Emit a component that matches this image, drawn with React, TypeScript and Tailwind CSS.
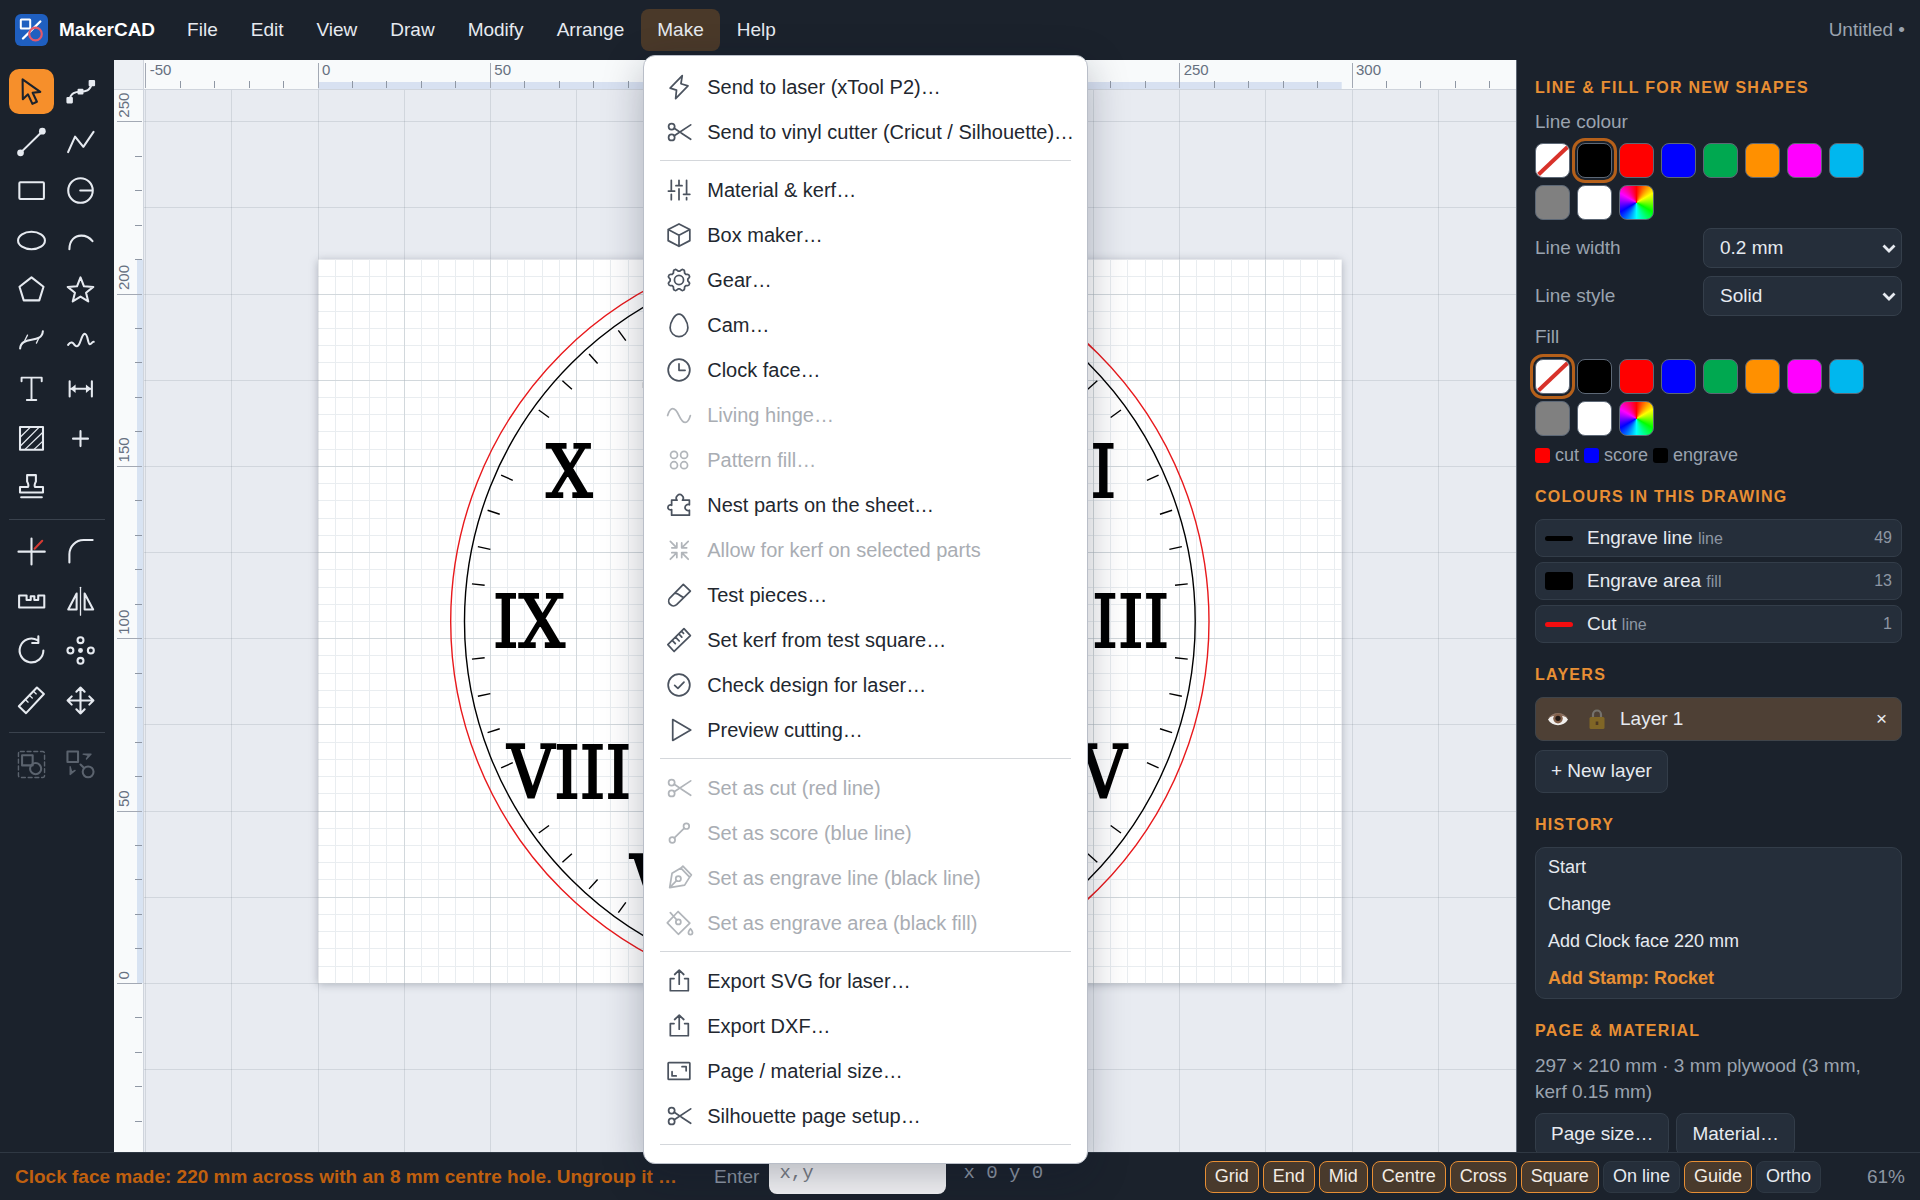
import React, { useState } from "react";

const SCALE = 3.4468; // px per mm at 61%
const ORIGIN_X = 174;
const ORIGIN_Y = 893.4;
const PAGE_W = 297;
const PAGE_H = 210;

const mmX = (mm: number) => ORIGIN_X + mm * SCALE;
const mmY = (mm: number) => ORIGIN_Y - mm * SCALE;
const snap = (v: number) => Math.round(v) + 0.5;

const range = (from: number, to: number, step: number) => {
  const out: number[] = [];
  for (let v = from; v <= to; v += step) out.push(v);
  return out;
};

/* ---------- icons ---------- */

const gearPath = () => {
  const pts: string[] = [];
  for (let i = 0; i < 64; i++) {
    const a = (i / 64) * Math.PI * 2;
    const wave = -Math.cos(a * 8);
    const r = 9.2 + 1.3 * Math.max(-0.8, Math.min(0.8, wave * 1.6));
    pts.push(
      `${(12 + r * Math.sin(a)).toFixed(2)} ${(12 - r * Math.cos(a)).toFixed(2)}`
    );
  }
  return `M${pts.join("L")}Z`;
};

const menuIcons: Record<string, React.ReactNode> = {
  bolt: <path d="M15 1.5 3.8 13l5.9 1.9-.8 7.8L20.3 11l-6.5-2z" />,
  scissors: (
    <>
      <circle cx="5.2" cy="7" r="2.8" />
      <circle cx="5.2" cy="17" r="2.8" />
      <path d="M7.6 8.6 12 11.5M14 12.9l8.8 5.8M7.6 15.4 22.8 5.4" />
    </>
  ),
  sliders: (
    <path d="M4.9 3v10M2.2 13H8M4.9 16v5M12 3v5M9.2 8h5.6M12 11v10M19 3v13M16.2 16H22M19 19v2" />
  ),
  box: (
    <path d="M12 1.8 22 7v10.2l-10 5.2-10-5.2V7zM2 7l10 5.2L22 7M12 12.2v10.2" />
  ),
  gear: (
    <>
      <path d={gearPath()} />
      <circle cx="12" cy="12" r="4.2" />
    </>
  ),
  cam: (
    <path d="M12 2C8 2 3.8 9.4 3.8 14.5a8.2 8.2 0 0 0 16.4 0C20.2 9.4 16 2 12 2z" />
  ),
  clock: (
    <>
      <circle cx="12" cy="12" r="10" />
      <path d="M12 6.4v5.9h5.6" />
    </>
  ),
  wave: <path d="M1.5 12.5c2.5-8.5 6.5-8.5 10.5 0s8 8.5 10.5 0" />,
  pattern: (
    <>
      <circle cx="7.4" cy="7.3" r="3.2" />
      <circle cx="16.7" cy="7.3" r="3.2" />
      <circle cx="7.4" cy="16.8" r="3.2" />
      <circle cx="16.7" cy="16.8" r="3.2" />
    </>
  ),
  puzzle: (
    <path d="M5.2 7.6h5a3.2 3.2 0 1 1 5 0h6.4v4.2a2.8 2.8 0 1 0 0 5v4.6H5.2v-5.2a2.3 2.3 0 1 1 0-4z" />
  ),
  shrink: (
    <path d="m4 4 6 6M10 5.5V10H5.4M20.5 4l-6 6M14.5 5.5V10h4.6M4 20.5l6-6M10 19v-4.5H5.4M20.5 20.5l-6-6M14.5 19v-4.5h4.6" />
  ),
  test: (
    <path d="m16 2.2 6.5 6.2-12.7 12.5a4.4 4.4 0 0 1-6.3-6.1zM8.8 10.6c2.6-.4 4.2 2.6 7.4 3.6" />
  ),
  ruler: (
    <path d="m16.6 1.5 5.9 6.4L7.5 22.6l-5.8-6.3zM5.8 12.4l2.8 3M8.8 9.3l3.4 3.6M11.8 6.3l2.8 3M14.4 3.9l1.8 1.9" />
  ),
  check: (
    <>
      <circle cx="12" cy="12" r="10" />
      <path d="m8 12.3 3 2.8 5.6-5.7" />
    </>
  ),
  play: <path d="M6.2 2.4 22.8 12 6.2 21.6z" />,
  score: (
    <>
      <circle cx="5.8" cy="18.5" r="2.6" />
      <circle cx="18.8" cy="5.7" r="2.6" />
      <path d="M7.7 16.6 16.9 7.6" />
    </>
  ),
  pen: (
    <>
      <path d="M3.4 20.8 5.6 7.6l8.2-4.8 8 8.4-4.6 7.4zM13.8 2.8 15.6 1l7.8 8.2-1.6 2M3.4 20.8l6.3-6.4" />
      <circle cx="11.4" cy="12.6" r="2.4" />
    </>
  ),
  bucket: (
    <>
      <path d="M11.2 1.4 22 12.2 11.4 22.4 1.2 11.8zM4 2.4l6 6.8" />
      <circle cx="11.4" cy="11" r="2.3" />
      <path d="M22.6 17.2c-1.2 1.8-1.9 2.6-1.9 3.6a1.9 1.9 0 0 0 3.8 0c0-1-.7-1.8-1.9-3.6z" />
    </>
  ),
  export: <path d="M7.4 9.8H4V21h16.6V9.8h-3.4M12.2 2v13M8 6l4.2-4 4.2 4" />,
  page: (
    <>
      <rect x="2" y="4.2" width="20" height="15.6" rx="0.6" />
      <path d="M5.6 12.6v4h3.8M14.8 8h3.8v3.8" />
    </>
  ),
};

const toolIcons: Record<string, React.ReactNode> = {
  select: (
    <path d="M5.1 2.6 5.3 18l4-3.8 3.4 7.4 3.5-1.7-3.3-6.9 5.9-.7z" />
  ),
  node: (
    <>
      <path d="M3.4 18.6C4.6 12.6 8 12.3 12 12.2s7.4-.5 8.8-6.6" />
      <g fill="currentColor" stroke="none">
        <rect x="1.1" y="16.2" width="5" height="5" rx="0.8" />
        <rect x="9.7" y="9.8" width="4.6" height="4.6" rx="0.8" />
        <rect x="18.3" y="3" width="5" height="5" rx="0.8" />
      </g>
    </>
  ),
  line: (
    <>
      <path d="M3.4 20.8 20.3 4.2" />
      <circle cx="3.5" cy="20.8" r="2.6" fill="currentColor" stroke="none" />
      <circle cx="20.4" cy="4" r="2.6" fill="currentColor" stroke="none" />
    </>
  ),
  polyline: <path d="M2.4 20.2 7.8 8.2l6.4 7.9L22.1 4.6" />,
  rect: <rect x="2.6" y="5.6" width="19" height="13" rx="0.8" />,
  circle: (
    <>
      <circle cx="12" cy="12" r="9.5" />
      <path d="M11.8 12h9.2" />
    </>
  ),
  ellipse: <ellipse cx="12" cy="12" rx="10.4" ry="6.8" />,
  arc: <path d="M3.4 18.8C3.4 12 7.5 8.2 12.6 8.2c3.6 0 6.5 1.5 8.7 4.3" />,
  pentagon: <path d="m12 2.6 9.3 7.3L18 20.4H6L2.7 9.9z" />,
  star: (
    <path d="m12 2.6 2.7 6.9 7.2.5-5.6 4.5 1.7 6.7-6-3.7-6 3.7 1.7-6.7L2.1 10l7.2-.5z" />
  ),
  spline: (
    <>
      <path d="M3.2 19C4 8.5 20 16 20.8 5.6" />
      <path strokeWidth="1" d="M6.8 12.8 8.9 8.6M15.8 14.8 17.6 11" />
    </>
  ),
  freehand: (
    <path d="M2.4 16.2c2.4-3.6 4-1.2 5.4.4 4 3.600 4.4-8.600 7.4-9 2.6 0 2.4 8 4 8 1.2.3 1.6-2 3-1.8" />
  ),
  text: (
    <path strokeWidth="1.5" d="M4.3 6.4V3.6h15.6v2.8M12 3.6v17.3M8.4 20.9h7.3" />
  ),
  dimension: (
    <>
      <path d="M3.6 6.4v11.7M20.8 6.4v11.7M5 12.2h14.5" />
      <path
        d="M8.2 8.9 4.2 12.2l4 3.3zM16.2 8.9l4 3.3-4 3.3z"
        fill="currentColor"
        stroke="none"
      />
    </>
  ),
  hatch: (
    <>
      <rect x="3.1" y="3.1" width="17.8" height="17.6" />
      <path
        strokeWidth="1"
        d="M3.6 10.6 10.8 3.6M3.6 17.6 17.6 3.6M7 20.4 20.4 7.6M14 20.4l6.4-6"
      />
    </>
  ),
  point: <path d="M12 6.3v11.6M6.2 12.1h11.6" />,
  stamp: (
    <path d="M3.1 11.6h6.1c1-1.2.3-2.6-.6-4.3V2.4h6.8v4.9c-.9 1.7-1.6 3.1-.6 4.3h6.1v4.2H3.1zM4 19.5h16" />
  ),
  trim: (
    <>
      <path d="M1.9 12.1h20.4M12 1.9v20.2" />
      <path d="m14.4 9.8 5.9-6.1" stroke="#d63a32" />
    </>
  ),
  fillet: <path d="M3.4 20.5v-6.4a11 11 0 0 1 11-11h7" />,
  joint: <path d="M2.4 7.4h5.8v3.4h3.2V8h2.8v2.8h3V7.4h4.7v9.3H2.4z" />,
  mirror: (
    <>
      <path d="M9 5.8v12.4H2.5zM15.2 5.8v12.4h6.6z" />
      <path strokeWidth="1" d="M12 1v21.6" />
    </>
  ),
  rotate: <path d="M21.2 12a9.2 9.2 0 1 1-4.6-8M17.3 1v5.2h-4.8" />,
  polar: (
    <>
      <circle cx="12" cy="4" r="2.3" />
      <circle cx="4.2" cy="12" r="2.3" />
      <circle cx="20" cy="12" r="2.3" />
      <circle cx="12" cy="20" r="2.3" />
      <circle cx="12" cy="12" r="1.9" fill="currentColor" stroke="none" />
    </>
  ),
  measure: (
    <>
      <path d="m16.2 2 5.4 5L7.8 21.8l-5.6-5.4z" />
      <path strokeWidth="1" d="m7.6 11.6 1.8 1.7M10.8 8.4l1.8 1.7M13.9 5.2l1.8 1.7" />
    </>
  ),
  move: (
    <path d="M12 2v20M2 12h20M8.800 5.200 12 2l3.200 3.200M8.800 18.800 12 22l3.200-3.200M5.200 8.800 2 12l3.200 3.200M18.800 8.800 22 12l-3.200 3.200" />
  ),
  group: (
    <>
      <rect
        x="1.9"
        y="1.9"
        width="20.2"
        height="20.2"
        rx="1.5"
        strokeWidth="1.1"
        strokeDasharray="3 2.2"
      />
      <rect x="4.7" y="4.9" width="8.2" height="7.8" />
      <circle cx="15.2" cy="15.2" r="4.3" />
    </>
  ),
  ungroup: (
    <>
      <rect x="1.9" y="1.9" width="8.2" height="8.2" />
      <circle cx="17.9" cy="17.7" r="4.2" />
      <path d="M12 12l2.4 2.4" />
      <path
        strokeWidth="1"
        fill="currentColor"
        d="M14 4h6.2l-3.600 3.700 1.600-2.700zM4 13.600v6.200l3.800-3.200-2.600 1.200z"
      />
    </>
  ),
};

const Icon = ({ children, className }: { children: React.ReactNode; className: string }) => (
  <svg
    viewBox="0 0 24 24"
    fill="none"
    stroke="currentColor"
    strokeWidth="1.6"
    strokeLinecap="round"
    strokeLinejoin="round"
    aria-hidden="true"
    className={`shrink-0 overflow-visible ${className}`}
  >
    {children}
  </svg>
);

/* ---------- top bar ---------- */

interface MenuEntry {
  icon: string;
  label: string;
  disabled?: boolean;
}

const makeMenu: MenuEntry[][] = [
  [
    { icon: "bolt", label: "Send to laser (xTool P2)…" },
    { icon: "scissors", label: "Send to vinyl cutter (Cricut / Silhouette)…" },
  ],
  [
    { icon: "sliders", label: "Material & kerf…" },
    { icon: "box", label: "Box maker…" },
    { icon: "gear", label: "Gear…" },
    { icon: "cam", label: "Cam…" },
    { icon: "clock", label: "Clock face…" },
    { icon: "wave", label: "Living hinge…", disabled: true },
    { icon: "pattern", label: "Pattern fill…", disabled: true },
    { icon: "puzzle", label: "Nest parts on the sheet…" },
    { icon: "shrink", label: "Allow for kerf on selected parts", disabled: true },
    { icon: "test", label: "Test pieces…" },
    { icon: "ruler", label: "Set kerf from test square…" },
    { icon: "check", label: "Check design for laser…" },
    { icon: "play", label: "Preview cutting…" },
  ],
  [
    { icon: "scissors", label: "Set as cut (red line)", disabled: true },
    { icon: "score", label: "Set as score (blue line)", disabled: true },
    { icon: "pen", label: "Set as engrave line (black line)", disabled: true },
    { icon: "bucket", label: "Set as engrave area (black fill)", disabled: true },
  ],
  [
    { icon: "export", label: "Export SVG for laser…" },
    { icon: "export", label: "Export DXF…" },
    { icon: "page", label: "Page / material size…" },
    { icon: "scissors", label: "Silhouette page setup…" },
  ],
];

const MakeMenu = () => (
  <div
    role="menu"
    className="absolute left-0 top-full z-20 ml-0.5 mt-1 w-[445px] rounded-xl border border-[#b9bec8] bg-white pb-3 pt-2 shadow-[0_12px_40px_rgba(15,23,42,0.28)]"
  >
    {makeMenu.map((group, i) => (
      <div key={i}>
        {group.map((item) => (
          <button
            key={item.label}
            role="menuitem"
            disabled={item.disabled}
            className="flex h-[45px] w-full items-center gap-[15px] whitespace-nowrap pl-[22px] text-left text-[20px] text-[#22272f] disabled:text-[#a9adb3]"
          >
            <Icon
              className={`h-[26px] w-[26px] ${
                item.disabled ? "text-[#b1b5ba]" : "text-[#4b535f]"
              }`}
            >
              {menuIcons[item.icon]}
            </Icon>
            {item.label}
          </button>
        ))}
        <hr className="mx-4 my-1.5 border-[#d4d7db]" />
      </div>
    ))}
  </div>
);

const Logo = () => (
  <svg viewBox="0 0 33 32" className="h-8 w-[33px]" fill="none" aria-hidden="true">
    <rect width="33" height="32" rx="6" fill="#1f5fc0" />
    <rect x="5.8" y="5.6" width="9.4" height="9" rx="0.5" stroke="#fff" strokeWidth="2" />
    <path d="M25.300 7.500 8 24.500" stroke="#fff" strokeWidth="2.4" strokeLinecap="round" />
    <circle cx="20.5" cy="20" r="6.3" stroke="#e2596b" strokeWidth="2.2" />
  </svg>
);

const menus = ["File", "Edit", "View", "Draw", "Modify", "Arrange", "Make", "Help"];

const TopBar = () => (
  <header className="flex h-[60px] shrink-0 items-center px-[15px]">
    <Logo />
    <span className="ml-[11px] mr-4 font-bold text-white">MakerCAD</span>
    <nav className="flex gap-px">
      {menus.map((name) => (
        <div key={name} className="relative">
          <button
            className={`h-[42px] rounded-lg px-4 ${name === "Make" ? "bg-[#4a3929]" : ""}`}
          >
            {name}
          </button>
          {name === "Make" && <MakeMenu />}
        </div>
      ))}
    </nav>
    <span className="ml-auto text-[#9aa3af]">Untitled •</span>
  </header>
);

/* ---------- tools ---------- */

const drawTools = [
  "select", "node", "line", "polyline", "rect", "circle", "ellipse", "arc",
  "pentagon", "star", "spline", "freehand", "text", "dimension", "hatch",
  "point", "stamp",
];
const editTools = ["trim", "fillet", "joint", "mirror", "rotate", "polar", "measure", "move"];
const groupTools = ["group", "ungroup"];

const ToolBar = () => {
  const [tool, setTool] = useState("select");

  const renderTool = (name: string, disabled = false) => (
    <button
      key={name}
      aria-label={name}
      disabled={disabled}
      onClick={() => setTool(name)}
      className={`flex h-[45px] w-[45px] items-center justify-center rounded-[10px] disabled:text-[#5b636e] ${
        tool === name ? "bg-[#f68f2b] text-[#1b222c]" : ""
      }`}
    >
      <Icon className="h-[31px] w-[31px]">{toolIcons[name]}</Icon>
    </button>
  );

  return (
    <div className="flex w-[114px] shrink-0 flex-col gap-[9px] px-[9px] pt-[9px]">
      <div className="grid h-[441px] grid-cols-[45px_45px] content-between gap-x-1">
        {drawTools.map((t) => renderTool(t))}
      </div>
      <hr className="border-[#3a424d]" />
      <div className="grid h-[194px] grid-cols-[45px_45px] content-between gap-x-1">
        {editTools.map((t) => renderTool(t))}
      </div>
      <hr className="border-[#3a424d]" />
      <div className="grid grid-cols-[45px_45px] gap-x-1">
        {groupTools.map((t) => renderTool(t, true))}
      </div>
    </div>
  );
};

/* ---------- canvas ---------- */

const HorizontalRuler = () => (
  <svg className="h-[29px] w-full" aria-hidden="true">
    <rect x={mmX(0)} y="22" width={PAGE_W * SCALE} height="7" fill="#d8e1f1" />
    {range(-50, 340, 10).map((mm) => {
      const major = mm % 50 === 0;
      return (
        <g key={mm}>
          <path
            d={`M${snap(mmX(mm) - 0.5)} ${major ? 3 : 21}V28`}
            stroke={major ? "#a3a9b4" : "#8f97a4"}
          />
          {major && (
            <text x={mmX(mm) + 4} y="15" fontSize="15" fill="#667080">
              {mm}
            </text>
          )}
        </g>
      );
    })}
  </svg>
);

const VerticalRuler = () => (
  <svg className="h-full w-[29px]" aria-hidden="true">
    <rect x="23" y={mmY(PAGE_H)} width="6" height={PAGE_H * SCALE} fill="#d8e3f2" />
    {range(-40, 250, 10).map((mm) => {
      const major = mm % 50 === 0;
      const y = mmY(mm);
      return (
        <g key={mm}>
          <path
            d={`M${major ? 3 : 21} ${snap(y - 0.5)}H28`}
            stroke={major ? "#a3a9b4" : "#8f97a4"}
          />
          {major && (
            <text
              transform={`translate(15 ${y - 4}) rotate(-90)`}
              fontSize="15"
              fill="#667080"
            >
              {mm}
            </text>
          )}
        </g>
      );
    })}
  </svg>
);

const numerals = ["XII", "I", "II", "III", "IV", "V", "VI", "VII", "VIII", "IX", "X", "XI"];

const ClockFace = () => {
  const cx = mmX(PAGE_W / 2);
  const cy = mmY(PAGE_H / 2);
  const at = (r: number, deg: number) => {
    const a = (deg * Math.PI) / 180;
    return [cx + r * SCALE * Math.sin(a), cy - r * SCALE * Math.cos(a)];
  };

  return (
    <g>
      <circle cx={cx} cy={cy} r={110 * SCALE} fill="none" stroke="#e8191c" strokeWidth="1.4" />
      <circle cx={cx} cy={cy} r={106 * SCALE} fill="none" stroke="#000" strokeWidth="1.4" />
      {range(0, 59, 1)
        .filter((m) => m % 5 !== 0)
        .map((m) => {
          const [x1, y1] = at(100.7, m * 6);
          const [x2, y2] = at(104.4, m * 6);
          return (
            <path key={m} d={`M${x1} ${y1}L${x2} ${y2}`} stroke="#000" strokeWidth="1.4" />
          );
        })}
      {numerals.map((n, i) => {
        const [x, y] = at(87.3, i * 30);
        return (
          <text
            key={n}
            x={x}
            y={y + 26}
            textAnchor="middle"
            fontSize="72"
            stroke="#000"
            strokeWidth="2"
            className="font-['DejaVu_Serif_Condensed','DejaVu_Serif',serif]"
          >
            {n}
          </text>
        );
      })}
    </g>
  );
};

const Canvas = () => (
  <main className="grid min-w-0 flex-1 grid-cols-[30px_minmax(0,1fr)] grid-rows-[30px_minmax(0,1fr)] overflow-hidden">
    <div className="border-b border-r border-[#cfd4dc] bg-[#edf0f4]" />
    <div className="border-b border-[#cfd4dc] bg-[#f8fafb]">
      <HorizontalRuler />
    </div>
    <div className="border-r border-[#cfd4dc] bg-[#f8fafb]">
      <VerticalRuler />
    </div>
    <svg className="h-full w-full bg-[#e8ebf1]" role="img" aria-label="Drawing">
      <rect
        x={mmX(0)}
        y={mmY(PAGE_H)}
        width={PAGE_W * SCALE}
        height={PAGE_H * SCALE}
        fill="#fff"
        className="drop-shadow-[0_1px_4px_rgba(30,41,59,0.3)]"
      />
      <g stroke="#e9edf0">
        {range(5, 295, 5).map((mm) => (
          <path key={mm} d={`M${snap(mmX(mm) - 0.5)} ${mmY(PAGE_H)}V${mmY(0)}`} />
        ))}
        {range(5, 205, 5).map((mm) => (
          <path key={mm} d={`M${mmX(0)} ${snap(mmY(mm) - 0.5)}H${mmX(PAGE_W)}`} />
        ))}
      </g>
      <g stroke="#5b6b78" strokeOpacity="0.16">
        {range(-50, 325, 25).map((mm) => (
          <path key={mm} d={`M${snap(mmX(mm) - 0.5)} 0V2000`} />
        ))}
        {range(-50, 250, 25).map((mm) => (
          <path key={mm} d={`M0 ${snap(mmY(mm) - 0.5)}H3000`} />
        ))}
      </g>
      <ClockFace />
    </svg>
  </main>
);

/* ---------- side panel ---------- */

const palette = [
  { name: "None", className: "bg-white" },
  { name: "Black", className: "bg-black" },
  { name: "Red", className: "bg-[#ff0000]" },
  { name: "Blue", className: "bg-[#0000ff]" },
  { name: "Green", className: "bg-[#00a850]" },
  { name: "Orange", className: "bg-[#ff9000]" },
  { name: "Magenta", className: "bg-[#ff00ff]" },
  { name: "Cyan", className: "bg-[#00b7ee]" },
  { name: "Grey", className: "bg-[#808080]" },
  { name: "White", className: "bg-white" },
  {
    name: "Custom",
    className: "bg-[conic-gradient(red,yellow,lime,cyan,blue,magenta,red)]",
  },
];

const Swatches = ({ initial, label }: { initial: string; label: string }) => {
  const [selected, setSelected] = useState(initial);
  return (
    <div role="group" aria-label={label} className="flex flex-wrap gap-[7px]">
      {palette.map(({ name, className }) => (
        <button
          key={name}
          aria-label={name}
          aria-pressed={selected === name}
          onClick={() => setSelected(name)}
          className={`h-[35px] w-[35px] overflow-hidden rounded-lg border border-[#5d6876] ${className} ${
            selected === name ? "outline-[3px] outline-offset-2 outline-[#b5601a]" : ""
          }`}
        >
          {name === "None" && (
            <svg viewBox="0 0 33 33" className="h-full w-full" aria-hidden="true">
              <path d="M2.5 30.5 31.5 3" stroke="#d8322a" strokeWidth="4" />
            </svg>
          )}
        </button>
      ))}
    </div>
  );
};

const SelectRow = ({ id, label, options }: { id: string; label: string; options: string[] }) => (
  <div className="mt-2 flex items-center justify-between">
    <label htmlFor={id} className="text-[#9aa3af]">
      {label}
    </label>
    <div className="relative">
      <select
        id={id}
        className="h-10 w-[199px] appearance-none rounded-lg border border-[#353f4b] bg-[#252e3a] px-4 text-[#e6eaf0]"
      >
        {options.map((o) => (
          <option key={o}>{o}</option>
        ))}
      </select>
      <svg
        viewBox="0 0 14 9"
        className="pointer-events-none absolute right-1.5 top-4 h-[9px] w-3.5"
        fill="none"
        aria-hidden="true"
      >
        <path d="m1.500 1.500 5.500 5.500 5.500-5.500" stroke="#e6eaf0" strokeWidth="2.8" />
      </svg>
    </div>
  </div>
);

const Heading = ({ children }: { children: React.ReactNode }) => (
  <h2 className="mb-3 text-[16px] font-bold uppercase leading-5 tracking-[0.08em] text-[#e88f34]">
    {children}
  </h2>
);

const drawingColours = [
  { name: "Engrave line", kind: "line", count: 49, mark: "h-[5px] bg-black" },
  { name: "Engrave area", kind: "fill", count: 13, mark: "h-[18px] bg-black" },
  { name: "Cut", kind: "line", count: 1, mark: "h-[5px] bg-[#f40d0f]" },
];

const history = ["Start", "Change", "Add Clock face 220 mm", "Add Stamp: Rocket"];

const panelButton = "h-[43px] rounded-lg border border-[#333d49] bg-[#252e3a] px-[15px]";

const SidePanel = () => (
  <aside className="flex w-[404px] shrink-0 flex-col gap-[22px] overflow-hidden border-l border-[#5d6673] px-[18px] pt-[18px]">
    <section>
      <Heading>Line &amp; fill for new shapes</Heading>
      <p className="mb-[9px] leading-6 text-[#9aa3af]">Line colour</p>
      <Swatches initial="Black" label="Line colour" />
      <SelectRow id="line-width" label="Line width" options={["0.2 mm", "0.5 mm", "1 mm"]} />
      <SelectRow id="line-style" label="Line style" options={["Solid", "Dashed", "Dotted"]} />
      <p className="mb-[10px] mt-[9px] leading-6 text-[#9aa3af]">Fill</p>
      <Swatches initial="None" label="Fill" />
      <div className="mt-[9px] flex items-center gap-[5px] text-[18px] leading-5 text-[#9aa3af]">
        <span className="h-[15px] w-[15px] rounded-[3px] bg-[#ff0000]" />
        cut
        <span className="h-[15px] w-[15px] rounded-[3px] bg-[#0000ff]" />
        score
        <span className="h-[15px] w-[15px] rounded-[3px] bg-black" />
        engrave
      </div>
    </section>

    <section>
      <Heading>Colours in this drawing</Heading>
      <div className="flex flex-col gap-[5px]">
        {drawingColours.map((c) => (
          <button
            key={c.name}
            className="flex h-[38px] items-center rounded-lg border border-[#333d49] bg-[#252e3a] px-[9px] text-left"
          >
            <span className={`mr-[14px] w-7 rounded-[3px] ${c.mark}`} />
            <span>
              {c.name} <span className="text-[16px] text-[#8d96a3]">{c.kind}</span>
            </span>
            <span className="ml-auto text-[16px] text-[#8d96a3]">{c.count}</span>
          </button>
        ))}
      </div>
    </section>

    <section>
      <Heading>Layers</Heading>
      <div className="flex h-11 items-center rounded-lg border border-[#3f444a] bg-[#4e4035] pl-[11px] pr-[14px]">
        <button aria-label="Hide layer">
          <svg viewBox="0 0 22 16" className="h-4 w-[22px]" aria-hidden="true">
            <path d="M1 8.5C5 1 17 1 21 8.5 17 16 5 16 1 8.5z" fill="#f2f0ee" />
            <path d="M1 7.5C5 0 17 0 21 7.5 17 3.5 5 3.5 1 7.5z" fill="#8a7060" />
            <circle cx="11" cy="7.6" r="4.8" fill="#83604a" />
            <circle cx="11" cy="7.3" r="2.6" fill="#211915" />
          </svg>
        </button>
        <button aria-label="Lock layer" className="ml-5">
          <svg viewBox="0 0 16 22" className="h-[22px] w-4" aria-hidden="true">
            <path
              d="M4 10V6.5a4 4 0 0 1 8 0V10"
              fill="none"
              stroke="#75726c"
              strokeWidth="2.2"
            />
            <rect x="0.5" y="9" width="15" height="12" rx="1.5" fill="#806626" />
            <path d="M8 13.500v3.500" stroke="#4c3822" strokeWidth="2.6" />
          </svg>
        </button>
        <span className="ml-[15px]">Layer 1</span>
        <button aria-label="Delete layer" className="ml-auto">
          ×
        </button>
      </div>
      <button className={`mt-[9px] ${panelButton}`}>+ New layer</button>
    </section>

    <section>
      <Heading>History</Heading>
      <ol className="rounded-[10px] border border-[#333d49] bg-[#252e3a] py-px text-[18px]">
        {history.map((entry, i) => (
          <li key={entry}>
            <button
              className={`h-[37px] w-full px-3 text-left ${
                i === history.length - 1 ? "font-bold text-[#e88f34]" : ""
              }`}
            >
              {entry}
            </button>
          </li>
        ))}
      </ol>
    </section>

    <section>
      <Heading>Page &amp; material</Heading>
      <p className="pr-4 leading-[26px] text-[#9aa3af]">
        297 × 210 mm · 3 mm plywood (3 mm, kerf 0.15 mm)
      </p>
      <div className="mt-2 flex gap-[7px]">
        <button className={panelButton}>Page size…</button>
        <button className={panelButton}>Material…</button>
      </div>
    </section>
  </aside>
);

/* ---------- status bar ---------- */

const StatusBar = () => {
  const [snaps, setSnaps] = useState<Record<string, boolean>>({
    Grid: true,
    End: true,
    Mid: true,
    Centre: true,
    Cross: true,
    Square: true,
    "On line": false,
    Guide: true,
    Ortho: false,
  });

  return (
    <footer className="flex h-12 shrink-0 items-center border-t border-[#2f3843] px-[15px]">
      <p className="w-[681px] truncate pt-0.5 font-bold text-[#c0600f]">
        Clock face made: 220 mm across with an 8 mm centre hole. Ungroup it …
      </p>
      <label htmlFor="coords" className="ml-[18px] pt-0.5 text-[#8d96a3]">
        Enter
      </label>
      <input
        id="coords"
        placeholder="x,y"
        className="mb-1 ml-[10px] h-[38px] w-[177px] rounded-lg bg-[#f4f4f6] px-2.5 pb-1 font-['Liberation_Mono',monospace] placeholder:text-[#7b7f86]"
      />
      <output className="mb-1.5 ml-[17px] whitespace-pre font-['Liberation_Mono',monospace] text-[#8d96a3]">
        x 0 y 0
      </output>
      <div className="ml-auto flex gap-1 text-[18px]">
        {Object.entries(snaps).map(([name, on]) => (
          <button
            key={name}
            aria-pressed={on}
            onClick={() => setSnaps({ ...snaps, [name]: !on })}
            className={`h-8 rounded-lg border px-[9px] ${
              on ? "border-[#e88f34] bg-[#493a2c] text-[#f3ece4]" : "border-[#2e3843] bg-[#252e3a]"
            }`}
          >
            {name}
          </button>
        ))}
      </div>
      <span className="w-[84px] pt-0.5 text-right text-[#8d96a3]">61%</span>
    </footer>
  );
};

const App: React.FC = () => {
  return (
    <div className="flex h-screen flex-col overflow-hidden bg-[#1b222c] font-['Liberation_Sans',Arial,sans-serif] text-[19px] text-[#e6eaf0]">
      <TopBar />
      <div className="flex min-h-0 flex-1">
        <ToolBar />
        <Canvas />
        <SidePanel />
      </div>
      <StatusBar />
    </div>
  );
};

export default App;
